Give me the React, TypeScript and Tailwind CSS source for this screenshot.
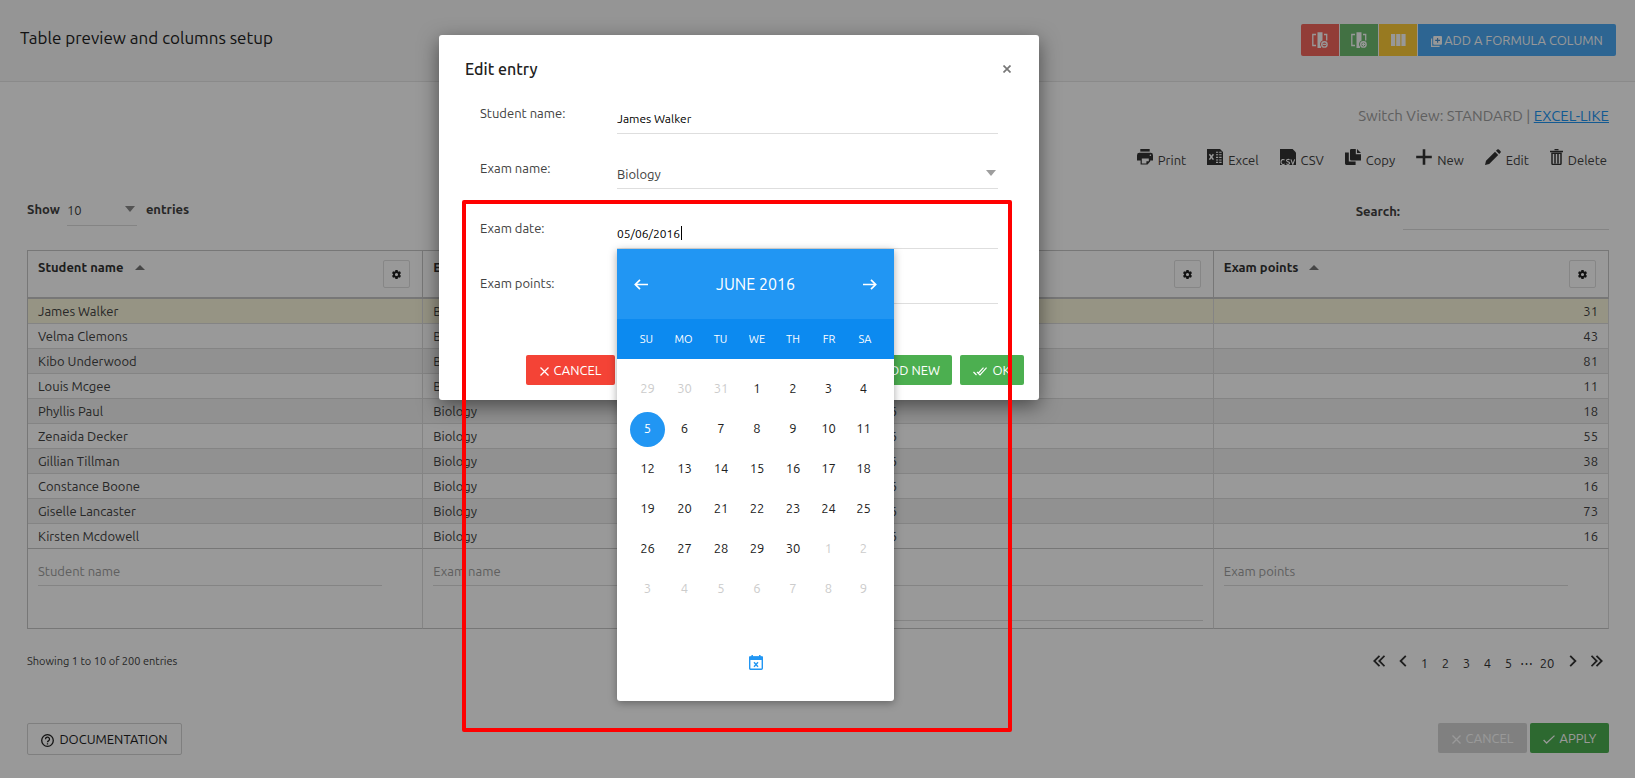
import type { ReactNode } from "react";

type IconProps = { className?: string };

const students: [string, number][] = [
  ["James Walker", 31],
  ["Velma Clemons", 43],
  ["Kibo Underwood", 81],
  ["Louis Mcgee", 11],
  ["Phyllis Paul", 18],
  ["Zenaida Decker", 55],
  ["Gillian Tillman", 38],
  ["Constance Boone", 16],
  ["Giselle Lancaster", 73],
  ["Kirsten Mcdowell", 16],
];

const weekdays = ["SU", "MO", "TU", "WE", "TH", "FR", "SA"];

const days = [
  ...[29, 30, 31].map((d) => ({ d, out: true })),
  ...Array.from({ length: 30 }, (_, i) => ({ d: i + 1, out: false })),
  ...Array.from({ length: 9 }, (_, i) => ({ d: i + 1, out: true })),
];

function ColumnToggleIcon({ plus }: { plus?: boolean }) {
  return (
    <svg className="size-4" viewBox="0 0 16 16" fill="none" aria-hidden="true">
      <path d="M4 2.5H.8v11H4M12 2.5h2.700v6" stroke="currentColor" strokeWidth="1.300" />
      <path d="M5.500 .2h5v8.200a4 4 0 0 0-1.500 6.300V16H5.500z" fill="currentColor" />
      <circle cx="12.400" cy="12.400" r="2.700" stroke="currentColor" strokeWidth="1.400" />
      <path
        d={plus ? "M10.800 12.400H14M12.400 10.800V14" : "M10.600 12.400h3.600"}
        stroke="currentColor"
        strokeWidth="1.300"
      />
    </svg>
  );
}

function ColumnsIcon() {
  return (
    <svg className="h-3 w-[15px]" viewBox="0 0 15 12" fill="currentColor" aria-hidden="true">
      <path d="M0 0h4.200v12H0zM5.200 0h4.200v12H5.200zM10.400 0h4.200v12h-4.200z" />
    </svg>
  );
}

function AddCopyIcon() {
  return (
    <svg className="size-[11px]" viewBox="0 0 11 11" aria-hidden="true">
      <path d="M.6 2.400v8h8" fill="none" stroke="currentColor" strokeWidth="1.200" />
      <rect x="2.200" y="0" width="8.800" height="8.800" rx="1" fill="currentColor" />
      <path d="M6.600 2v4.800M4.200 4.400H9" stroke="#2179c4" strokeWidth="1.100" />
    </svg>
  );
}

function PrintIcon() {
  return (
    <svg className="size-4" viewBox="0 0 16 16" fill="currentColor" aria-hidden="true">
      <path d="M3.300 0h9.400v2.600H3.300z" />
      <path
        fillRule="evenodd"
        d="M2.400 3.800h11.200A2.400 2.400 0 0 1 16 6.200v5.200h-2.800v1.200L10.500 15.600H3.600V11.400H0V6.200a2.400 2.400 0 0 1 2.400-2.400zm11 1.600a.8.8 0 1 0 0 1.600.8.8 0 0 0 0-1.600zM4.800 9.600v4.800h4.600v-2.200h2.400V9.600z"
      />
    </svg>
  );
}

function ExcelIcon() {
  return (
    <svg className="size-4" viewBox="0 0 16 16" aria-hidden="true">
      <path d="M0 0h13l3 3v13H0z" fill="currentColor" />
      <path d="M2.400 5.200l4 5.400M6.400 5.200l-4 5.400" stroke="#fff" strokeWidth="1.500" />
      <path
        d="M9 3.200h2.200M9 5.800h2.200M9 8.400h2.200M9 11h2.200M9 13.400h2.200M12.200 3.200h2.400M12.200 5.800h2.400M12.200 8.400h2.400M12.200 11h2.400M12.200 13.400h2.400"
        stroke="#fff"
        strokeWidth="1.100"
      />
    </svg>
  );
}

function CsvIcon() {
  return (
    <svg className="size-4" viewBox="0 0 16 16" aria-hidden="true">
      <path d="M0 0h12.600L16 3.400V16H0z" fill="currentColor" />
      <path
        d="M4.600 11.200C3.400 9.900 1 10.400 1 13s2.300 3.100 3.600 1.800M9.600 10.900c-1-.8-3.100-.6-3.100.7 0 1.600 3.200 1 3.200 2.500 0 1.500-2.400 1.600-3.400.6M10.900 10.400l1.900 5 1.900-5"
        fill="none"
        stroke="#fff"
        strokeWidth="1.100"
      />
    </svg>
  );
}

function CopyIcon() {
  return (
    <svg className="size-4" viewBox="0 0 16 16" fill="currentColor" aria-hidden="true">
      <path d="M0 3.600h3.800v9h6.800V16H1.400A1.400 1.400 0 0 1 0 14.600z" />
      <path d="M6.200 0h4.600v5.200H16v6.200H6.200A1.200 1.200 0 0 1 5 10.200V1.200A1.200 1.200 0 0 1 6.200 0z" />
      <path d="M12 0l4 4h-4z" />
    </svg>
  );
}

function PlusIcon() {
  return (
    <svg className="size-4" viewBox="0 0 16 16" aria-hidden="true">
      <path d="M8 .2v15.600M.2 8h15.600" stroke="currentColor" strokeWidth="2.600" />
    </svg>
  );
}

function PencilIcon() {
  return (
    <svg className="size-4" viewBox="0 0 16 16" fill="currentColor" aria-hidden="true">
      <path d="M0 16l1-4.200L10 2.800l3.200 3.200-9 9zM11 1.800L12.200.6a1.200 1.200 0 0 1 1.700 0l1.500 1.500a1.200 1.200 0 0 1 0 1.700L14.200 5z" />
    </svg>
  );
}

function TrashIcon() {
  return (
    <svg className="h-4 w-[13px]" viewBox="0 0 13 16" aria-hidden="true">
      <path d="M4.500.6h4M0 2.500h13" stroke="currentColor" strokeWidth="1.300" />
      <path d="M2 4.200h9v10.200a1 1 0 0 1-1 1H3a1 1 0 0 1-1-1zM5 5v9.500M8 5v9.500" fill="none" stroke="currentColor" strokeWidth="1.500" />
    </svg>
  );
}

function GearIcon() {
  return (
    <svg className="size-[9px]" viewBox="0 0 20 20" fill="currentColor" aria-hidden="true">
      <path
        fillRule="evenodd"
        d="M7.500 0h5l.5 3 1.900 1.100 2.800-1.100 2.300 4.200L17.600 9v2l2.400 1.800-2.300 4.200-2.800-1.100L13 17l-.5 3h-5L7 17l-1.900-1.100L2.300 17 0 12.800 2.400 11V9L0 7.200 2.300 3l2.800 1.100L7 3zM10 6.500a3.500 3.500 0 1 0 0 7 3.500 3.500 0 0 0 0-7z"
      />
    </svg>
  );
}

function CaretUp() {
  return (
    <svg className="h-[5px] w-[10px]" viewBox="0 0 10 5" fill="currentColor" aria-hidden="true">
      <path d="M5 0l5 5H0z" />
    </svg>
  );
}

function CaretDown({ className = "" }: IconProps) {
  return (
    <svg className={`h-[6px] w-[10px] ${className}`} viewBox="0 0 10 6" fill="currentColor" aria-hidden="true">
      <path d="M0 0h10L5 6z" />
    </svg>
  );
}

function Chevrons({ d }: { d: string }) {
  return (
    <svg className="size-3" viewBox="0 0 12 12" fill="none" stroke="currentColor" strokeWidth="1.800" aria-hidden="true">
      <path d={d} />
    </svg>
  );
}

function CrossIcon({ className = "" }: IconProps) {
  return (
    <svg className={`size-[9px] ${className}`} viewBox="0 0 9 9" fill="none" stroke="currentColor" strokeWidth="1.300" aria-hidden="true">
      <path d="M.5.5l8 8M8.500.5l-8 8" />
    </svg>
  );
}

function CheckIcon() {
  return (
    <svg className="h-[9px] w-3" viewBox="0 0 12 9" fill="none" stroke="currentColor" strokeWidth="1.300" aria-hidden="true">
      <path d="M.6 5l3 3L11.500.6" />
    </svg>
  );
}

function DoubleCheckIcon() {
  return (
    <svg className="h-[9px] w-[14px]" viewBox="0 0 14 9" fill="none" stroke="currentColor" strokeWidth="1.200" aria-hidden="true">
      <path d="M.5 5l3 3M4 5l3 3L13.600.6M5.500 6L10.500.6" />
    </svg>
  );
}

function HelpIcon() {
  return (
    <svg className="size-[13px]" viewBox="0 0 13 13" fill="none" stroke="currentColor" strokeWidth="1.300" aria-hidden="true">
      <circle cx="6.500" cy="6.500" r="5.800" />
      <path d="M4.500 5.200a2 2 0 1 1 3 1.700c-.7.4-1 .7-1 1.300M6.500 9.200v1.200" />
    </svg>
  );
}

function ArrowIcon({ right }: { right?: boolean }) {
  return (
    <svg className="h-[11px] w-[14px]" viewBox="0 0 14 11" fill="none" stroke="currentColor" strokeWidth="1.700" aria-hidden="true">
      <path d={right ? "M0 5.500h12.500M8 .8l4.700 4.700L8 10.200" : "M14 5.500H1.500M6 .8L1.300 5.500 6 10.200"} />
    </svg>
  );
}

function ClearDateIcon() {
  return (
    <svg className="h-[15px] w-[14px]" viewBox="0 0 14 15" fill="none" stroke="currentColor" aria-hidden="true">
      <rect x=".7" y="2" width="12.600" height="12.300" rx="1" strokeWidth="1.400" />
      <path d="M0 3.300h14" strokeWidth="3.400" />
      <path d="M3.200 0v3M10.800 0v3" strokeWidth="1.500" />
      <path d="M5 7.300l4 4.400M9 7.300l-4 4.400" strokeWidth="1.400" />
    </svg>
  );
}

const tools: [string, ReactNode][] = [
  ["Print", <PrintIcon />],
  ["Excel", <ExcelIcon />],
  ["CSV", <CsvIcon />],
  ["Copy", <CopyIcon />],
  ["New", <PlusIcon />],
  ["Edit", <PencilIcon />],
  ["Delete", <TrashIcon />],
];

const filterInput =
  "block h-[30px] w-[92%] border-b border-[#dcdcdc] bg-transparent text-[13px] text-[#424242] outline-none placeholder:text-[#9e9e9e]";

const fieldInput = "h-full w-full border-b border-[#dedede] bg-transparent outline-none";

function FormRow({ label, id, children }: { label: string; id: string; children: ReactNode }) {
  return (
    <div className="flex h-[31px]">
      <label htmlFor={id} className="w-[137px] shrink-0 leading-5">
        {label}
      </label>
      <div className="relative flex-1">{children}</div>
    </div>
  );
}

function Calendar() {
  return (
    <div className="absolute top-full left-0 z-10 w-[277px] overflow-hidden rounded-b-[3px] bg-white shadow-[0_2px_8px_rgba(0,0,0,0.35)]">
      <div className="flex h-[70px] items-center justify-between bg-[#2196f3] px-[17px] text-white">
        <button type="button" aria-label="Previous month">
          <ArrowIcon />
        </button>
        <span className="text-base">JUNE 2016</span>
        <button type="button" aria-label="Next month">
          <ArrowIcon right />
        </button>
      </div>
      <div className="grid h-10 grid-cols-[37px_37px_37px_36px_36px_36px_36px] items-center bg-[#0c8af0] pl-[11px] text-center text-[11px] text-white">
        {weekdays.map((w) => (
          <span key={w}>{w}</span>
        ))}
      </div>
      <div className="grid grid-cols-[37px_37px_36px_36px_36px_35px_35px] pt-[10px] pl-3">
        {days.map(({ d, out }, i) => (
          <div key={i} className="flex h-10 items-center justify-center">
            <button
              type="button"
              className={
                !out && d === 5
                  ? "size-[35px] rounded-full bg-[#2196f3] text-[13px] text-white"
                  : out
                    ? "size-[35px] rounded-full text-[13px] text-[#cccccc]"
                    : "size-[35px] rounded-full text-[13px] text-[#212121]"
              }
            >
              {d}
            </button>
          </div>
        ))}
      </div>
      <div className="flex justify-center pt-[46px] pb-[31px] text-[#2196f3]">
        <button type="button" aria-label="Clear date">
          <ClearDateIcon />
        </button>
      </div>
    </div>
  );
}

function EditDialog() {
  return (
    <div className="absolute inset-0 flex items-start justify-center bg-black/40 pt-[35px] pr-[157px]">
      <div
        role="dialog"
        aria-labelledby="dialog-title"
        className="relative w-[600px] rounded-[3px] bg-white pt-[22px] pb-[15px] text-[13px] text-[#424242] shadow-[0_6px_20px_rgba(0,0,0,0.5)]"
      >
        <div className="flex items-center justify-between pr-7 pl-[26px]">
          <h2 id="dialog-title" className="text-base leading-6 font-medium text-[#212121]">
            Edit entry
          </h2>
          <button type="button" aria-label="Close" className="text-[#777]">
            <svg className="size-2" viewBox="0 0 8 8" fill="none" stroke="currentColor" strokeWidth="1.700" aria-hidden="true">
              <path d="M.5.5l7 7M7.500.5l-7 7" />
            </svg>
          </button>
        </div>
        <div className="mt-[22px] px-[41px]">
          <FormRow label="Student name:" id="student">
            <input id="student" className={`${fieldInput} text-xs text-black`} defaultValue="James Walker" />
          </FormRow>
          <div className="mt-6">
            <FormRow label="Exam name:" id="exam">
              <select id="exam" className={`${fieldInput} appearance-none pt-[3px]`} defaultValue="Biology">
                <option>Biology</option>
              </select>
              <CaretDown className="pointer-events-none absolute top-3 right-[2px] text-[#9e9e9e]" />
            </FormRow>
          </div>
          <div className="mt-[29px]">
            <FormRow label="Exam date:" id="date">
              <input id="date" className={`${fieldInput} text-xs text-black`} defaultValue="05/06/2016" />
              <span className="absolute top-2 left-16 h-[14px] w-px bg-black" />
              <Calendar />
            </FormRow>
          </div>
          <div className="mt-6">
            <FormRow label="Exam points:" id="points">
              <input id="points" className={`${fieldInput} text-xs text-black`} />
            </FormRow>
          </div>
        </div>
        <div className="mt-[51px] flex justify-end gap-2 pr-[15px] text-[13px] text-white">
          <button type="button" className="flex h-[30px] w-[89px] items-center justify-center gap-[5px] rounded-[2px] bg-[#f44336] pt-[2px]">
            <CrossIcon />
            CANCEL
          </button>
          <button type="button" className="h-[30px] w-[77px] rounded-[2px] bg-[#2196f3]">
            PREV
          </button>
          <button type="button" className="h-[30px] w-[77px] rounded-[2px] bg-[#2196f3]">
            NEXT
          </button>
          <button type="button" className="h-[30px] w-[159px] rounded-[2px] bg-[#4caf50] pt-[2px] pr-3 text-right">
            OK AND ADD NEW
          </button>
          <button type="button" className="flex h-[30px] w-16 items-center justify-center gap-[5px] rounded-[2px] bg-[#4caf50] pt-[2px]">
            <DoubleCheckIcon />
            OK
          </button>
        </div>
        <div className="pointer-events-none absolute top-[165px] left-[23px] z-20 h-[532px] w-[550px] rounded-[2px] border-4 border-[#ff0000]" />
      </div>
    </div>
  );
}

function HeaderCell({ title }: { title: string }) {
  return (
    <th className="h-12 border-r border-b-2 border-[#c6c6c6] py-0 pr-3 pl-[10px] text-left align-top font-bold text-[#333]">
      <div className="flex items-start justify-between">
        <button type="button" className="mt-[6px] flex items-center gap-[11px] leading-5 font-bold">
          {title}
          <span className="text-[#777]">
            <CaretUp />
          </span>
        </button>
        <button
          type="button"
          aria-label={`${title} settings`}
          className="mt-[9px] flex h-7 w-[27px] items-center justify-center rounded-[2px] border border-[#e0e0e0] text-[#222]"
        >
          <GearIcon />
        </button>
      </div>
    </th>
  );
}

export default function App() {
  return (
    <div className="relative min-h-screen overflow-hidden bg-white font-['Ubuntu','Noto_Sans',sans-serif] text-[13px] text-[#424242]">
      <header className="flex h-[82px] items-start justify-between border-b border-[#e6e6e6] bg-[#f8f8f8] pr-[19px] pl-5">
        <h1 className="mt-[26px] text-[17px] leading-6 text-[#212121]">Table preview and columns setup</h1>
        <div className="mt-6 flex gap-px text-white">
          <button type="button" aria-label="Remove column" className="flex h-8 w-[38px] items-center justify-center rounded-l-[2px] bg-[#f44336] opacity-80">
            <ColumnToggleIcon />
          </button>
          <button type="button" aria-label="Add column" className="flex h-8 w-[38px] items-center justify-center bg-[#4caf50] opacity-80">
            <ColumnToggleIcon plus />
          </button>
          <button type="button" aria-label="Columns" className="flex h-8 w-[38px] items-center justify-center bg-[#ffc107] opacity-80">
            <ColumnsIcon />
          </button>
          <button type="button" className="flex h-8 w-[198px] items-center justify-center gap-[2px] rounded-r-[2px] bg-[#2196f3] pt-[2px] opacity-80">
            <AddCopyIcon />
            ADD A FORMULA COLUMN
          </button>
        </div>
      </header>

      <main className="pt-6 pr-[26px] pl-[27px]">
        <p className="text-right text-[15px] leading-5 text-[#9e9e9e]">
          Switch View: STANDARD |{" "}
          <a href="#excel" className="text-[#2196f3] underline">
            EXCEL-LIKE
          </a>
        </p>

        <div className="mt-[22px] flex h-6 items-center justify-end gap-[21px] pr-[2px]">
          {tools.map(([name, icon]) => (
            <button key={name} type="button" className="flex items-center gap-[5px] leading-5">
              <span className="mb-[6px] text-[#333]">{icon}</span>
              {name}
            </button>
          ))}
        </div>

        <div className="mt-[18px] flex h-10 items-start justify-between">
          <div className="flex items-start leading-5">
            <label htmlFor="page-size" className="mt-[9px] font-bold">
              Show
            </label>
            <div className="relative mr-[9px] ml-[7px]">
              <select
                id="page-size"
                className="h-9 w-[70px] appearance-none border-b border-[#dcdcdc] bg-transparent pt-[5px] outline-none"
                defaultValue="10"
              >
                <option>10</option>
              </select>
              <CaretDown className="pointer-events-none absolute top-4 right-[2px] text-[#8a8a8a]" />
            </div>
            <span className="mt-[9px] font-bold">entries</span>
          </div>
          <div className="flex items-start gap-[3px]">
            <label htmlFor="search" className="mt-[11px] leading-5 font-bold">
              Search:
            </label>
            <input id="search" className="h-10 w-[206px] border-b border-[#dcdcdc] bg-transparent outline-none" />
          </div>
        </div>

        <table className="mt-5 w-full table-fixed border-separate border-spacing-0 border-t border-l border-[#c6c6c6]">
          <thead>
            <tr>
              <HeaderCell title="Student name" />
              <HeaderCell title="Exam name" />
              <HeaderCell title="Exam date" />
              <HeaderCell title="Exam points" />
            </tr>
          </thead>
          <tbody className="[&_td]:h-[25px] [&_td]:border-r [&_td]:border-b [&_td]:border-[#dcdcdc] [&_td]:px-[10px] [&_td]:py-0 [&_td]:leading-5 [&_tr:last-child_td]:border-b-[#c6c6c6]">
            {students.map(([name, points], i) => (
              <tr key={name} className={i === 0 ? "bg-[#faf7dc]" : i % 2 === 0 ? "bg-[#f2f2f2]" : "bg-white"}>
                <td>{name}</td>
                <td>Biology</td>
                <td>05/06/2016</td>
                <td className="text-right">{points}</td>
              </tr>
            ))}
          </tbody>
          <tfoot className="[&_td]:h-20 [&_td]:border-r [&_td]:border-b [&_td]:border-r-[#dcdcdc] [&_td]:border-b-[#c6c6c6] [&_td]:px-[10px] [&_td]:pt-[7px] [&_td]:pb-0 [&_td]:align-top">
            <tr>
              <td>
                <input aria-label="Filter by student name" placeholder="Student name" className={filterInput} />
              </td>
              <td>
                <input aria-label="Filter by exam name" placeholder="Exam name" className={filterInput} />
              </td>
              <td>
                <input
                  aria-label="Filter from date"
                  className="block h-[30px] w-full border-b border-[#dcdcdc] bg-transparent outline-none"
                />
                <input
                  aria-label="Filter to date"
                  className="mt-[5px] block h-[30px] w-full border-b border-[#dcdcdc] bg-transparent outline-none"
                />
              </td>
              <td>
                <input aria-label="Filter by exam points" placeholder="Exam points" className={filterInput} />
              </td>
            </tr>
          </tfoot>
        </table>

        <div className="mt-[22px] flex h-5 items-center justify-between">
          <p className="text-[11px]">Showing 1 to 10 of 200 entries</p>
          <nav aria-label="Pagination" className="flex items-center text-[13px] text-[#333]">
            <button type="button" aria-label="First" className="flex w-6 justify-center">
              <Chevrons d="M6.500.8L1.300 6l5.200 5.200M11.500.8L6.300 6l5.200 5.200" />
            </button>
            <button type="button" aria-label="Previous" className="flex w-[23px] justify-center">
              <Chevrons d="M8.800.8L3.600 6l5.200 5.200" />
            </button>
            {[1, 2, 3, 4, 5].map((n) => (
              <button key={n} type="button" className="w-[21px] pt-[6px] text-center">
                {n}
              </button>
            ))}
            <span className="w-[14px] pt-[6px] text-center">⋯</span>
            <button type="button" className="w-7 pt-[6px] text-center">
              20
            </button>
            <button type="button" aria-label="Next" className="flex w-6 justify-center">
              <Chevrons d="M3.200.8L8.400 6l-5.200 5.200" />
            </button>
            <button type="button" aria-label="Last" className="flex w-6 justify-center">
              <Chevrons d="M.5.8L5.700 6 .5 11.200M5.500.8L10.700 6l-5.200 5.200" />
            </button>
          </nav>
        </div>

        <footer className="mt-[52px] flex items-start justify-between">
          <button
            type="button"
            className="flex h-8 w-[155px] items-center justify-center gap-[5px] rounded-[2px] border border-[#d4d4d4] pt-[2px] text-[13px] text-[#212121]"
          >
            <HelpIcon />
            DOCUMENTATION
          </button>
          <div className="flex gap-[3px] text-white">
            <button type="button" disabled className="flex h-[30px] w-[89px] items-center justify-center gap-[5px] rounded-[2px] bg-[#d6d6d6] pt-[2px]">
              <CrossIcon />
              CANCEL
            </button>
            <button type="button" className="flex h-[30px] w-[79px] items-center justify-center gap-[5px] rounded-[2px] bg-[#4caf50] pt-[2px]">
              <CheckIcon />
              APPLY
            </button>
          </div>
        </footer>
      </main>

      <EditDialog />
    </div>
  );
}
